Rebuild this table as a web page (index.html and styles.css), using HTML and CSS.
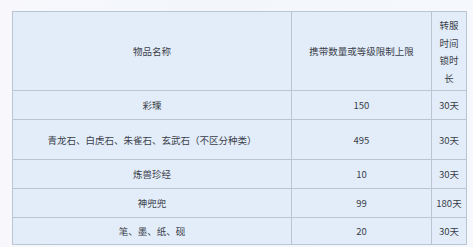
FILE: index.html
```html
<!DOCTYPE html>
<html lang="zh">
<head>
<meta charset="utf-8">
<link rel="stylesheet" href="styles.css">
</head>
<body>
<div class="page">
  <table class="limits">
    <colgroup>
      <col class="c-name">
      <col class="c-qty">
      <col class="c-time">
    </colgroup>
    <tr class="r-head">
      <td>物品名称</td>
      <td>携带数量或等级限制上限</td>
      <td class="narrow">转服<br>时间<br>锁时<br>长</td>
    </tr>
    <tr class="r-a"><td>彩瑮</td><td>150</td><td>30天</td></tr>
    <tr class="r-b"><td>青龙石、白虎石、朱雀石、玄武石（不区分种类）</td><td>495</td><td>30天</td></tr>
    <tr class="r-a"><td>炼兽珍经</td><td>10</td><td>30天</td></tr>
    <tr class="r-a"><td>神兜兜</td><td>99</td><td>180天</td></tr>
    <tr class="r-c"><td>笔、墨、纸、砚</td><td>20</td><td>30天</td></tr>
  </table>
</div>
</body>
</html>
```

FILE: styles.css
```css
html, body {
  margin: 0;
  padding: 0;
}
body {
  width: 473px;
  height: 247px;
  overflow: hidden;
  background: linear-gradient(90deg, #f8f8fc 0%, #f3f7fc 40%, #f5f8fc 100%);
  font-family: "Noto Sans CJK SC", "Noto Sans", sans-serif;
}
.page {
  padding: 11px 0 0 12px;
}
.limits {
  border-collapse: collapse;
  table-layout: fixed;
  width: 454px;
  background: #e2edf9;
  color: #3b404a;
  font-size: 9.5px;
  border-top: 1px solid #c9d3de;
}
.limits td {
  border: 1px solid #b9c5d3;
  text-align: center;
  padding: 0;
  line-height: 14px;
}
.c-name { width: 279px; }
.c-qty { width: 140px; }
.c-time { width: 35px; }
.r-head { height: 79px; }
.r-a { height: 29px; }
.r-b { height: 40px; }
.r-c { height: 27px; }
.limits td.narrow {
  line-height: 17.5px;
  padding-top: 2px;
}
```
